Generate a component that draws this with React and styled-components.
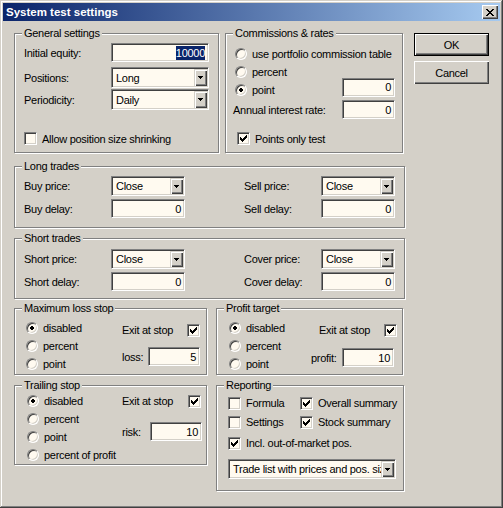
import React from "react";
import styled, { createGlobalStyle, css } from "styled-components";

const GlobalStyle = createGlobalStyle`
  html, body {
    margin: 0;
    padding: 0;
    background: #d4d0c8;
  }
  body {
    font-family: "Liberation Sans", Arial, sans-serif;
    font-size: 11px;
    letter-spacing: -0.28px;
    color: #000;
  }
`;

// little bitmap glyphs, one string per pixel row
const CHECK = ["......#", ".....##", "#...###", "##.###.", "#####..", ".###...", "..#...."];
const DOT = [".##.", "####", "####", ".##."];
const CROSS = ["##....##", ".##..##.", "..####..", "...##...", "..####..", ".##..##.", "##....##"];
const ARROW = ["#####", ".###.", "..#.."];

const Pixels = ({ rows, color = "#000" }) => (
  <svg
    width={rows[0].length}
    height={rows.length}
    shapeRendering="crispEdges"
    style={{ display: "block" }}
  >
    {rows.flatMap((r, y) =>
      [...r].map((c, x) =>
        c === "#" ? (
          <rect key={`${x}-${y}`} x={x} y={y} width="1" height="1" fill={color} />
        ) : null
      )
    )}
  </svg>
);

const Window = styled.div`
  box-sizing: border-box;
  width: 503px;
  height: 508px;
  padding: 3px;
  background: #d4d0c8;
  box-shadow: inset -1px -1px #404040, inset 1px 1px #d4d0c8,
    inset -2px -2px #808080, inset 2px 2px #fff;
  display: flex;
  flex-direction: column;
`;

const TitleBar = styled.div`
  height: 18px;
  flex: none;
  display: flex;
  align-items: center;
  justify-content: space-between;
  padding: 0 2px 0 3px;
  background: linear-gradient(to right, #0a246a, #a6caf0);
  color: #fff;
  font-weight: bold;
  font-size: 11.5px;
  letter-spacing: 0;
`;

const raised = css`
  background: #d4d0c8;
  box-shadow: inset 1px 1px #fff, inset -1px -1px #404040,
    inset -2px -2px #808080;
`;

const CloseButton = styled.div`
  box-sizing: border-box;
  width: 16px;
  height: 14px;
  ${raised}
  display: flex;
  align-items: center;
  justify-content: center;
`;

const Body = styled.div`
  flex: 1;
  display: flex;
  padding: 12px 0 0 11px;
`;

const MainColumn = styled.div`
  width: 391px;
  flex: none;
  display: flex;
  flex-direction: column;
`;

const ButtonColumn = styled.div`
  margin-left: 9px;
  display: flex;
  flex-direction: column;
  gap: 5px;
`;

const PushButton = styled.div`
  box-sizing: border-box;
  width: 75px;
  height: 23px;
  ${raised}
  display: flex;
  align-items: center;
  justify-content: center;
  ${(p) =>
    p.$default &&
    css`
      border: 1px solid #000;
    `}
`;

const Pair = styled.div`
  display: flex;
  align-items: flex-start;
  gap: ${(p) => p.$gap}px;
  margin-top: ${(p) => p.$mt || 0}px;
`;

const Group = styled.div`
  position: relative;
  box-sizing: border-box;
  flex: none;
  width: ${(p) => p.$w}px;
  height: ${(p) => p.$h}px;
  margin-top: ${(p) => p.$mt || 0}px;
  padding-left: ${(p) => p.$pl || 0}px;
  border: 1px solid #808080;
  box-shadow: inset 1px 1px #fff, 1px 1px #fff;
  display: flex;
  flex-direction: ${(p) => (p.$row ? "row" : "column")};
`;

const Legend = styled.span`
  position: absolute;
  top: -8px;
  left: 7px;
  padding: 0 2px;
  line-height: 14px;
  background: #d4d0c8;
  white-space: nowrap;
`;

const Column = styled.div`
  display: flex;
  flex-direction: column;
  flex: none;
  width: ${(p) => (p.$w ? `${p.$w}px` : "auto")};
`;

const Row = styled.div`
  display: flex;
  align-items: center;
  height: ${(p) => p.$h || 18}px;
  margin-top: ${(p) => p.$mt || 0}px;
  margin-left: ${(p) => p.$ml || 0}px;
`;

const Label = styled.span`
  flex: none;
  width: ${(p) => (p.$w ? `${p.$w}px` : "auto")};
  margin-left: ${(p) => p.$ml || 0}px;
  white-space: nowrap;
`;

const sunken = css`
  box-sizing: border-box;
  border: 1px solid;
  border-color: #808080 #fff #fff #808080;
  box-shadow: inset 1px 1px #404040, inset -1px -1px #d4d0c8;
  background: #fffaf0;
`;

const EditBox = styled.div`
  ${sunken}
  flex: none;
  width: ${(p) => p.$w}px;
  height: ${(p) => p.$h || 19}px;
  margin-top: ${(p) => p.$mt || 0}px;
  padding-right: 3px;
  display: flex;
  align-items: center;
  justify-content: flex-end;
`;

const Selected = styled.span`
  background: #0a246a;
  color: #fff;
  line-height: 14px;
`;

const ComboFrame = styled.div`
  ${sunken}
  flex: none;
  width: ${(p) => p.$w}px;
  height: ${(p) => p.$h || 20}px;
  padding: 1px;
  display: flex;
`;

const ComboText = styled.span`
  flex: 1;
  min-width: 0;
  overflow: hidden;
  white-space: nowrap;
  padding-left: 3px;
  display: flex;
  align-items: center;
`;

const DropButton = styled.span`
  flex: none;
  width: 13px;
  ${raised}
  box-shadow: inset 1px 1px #d4d0c8, inset 2px 2px #fff, inset -1px -1px #404040,
    inset -2px -2px #808080;
  display: flex;
  align-items: center;
  justify-content: center;
`;

const CheckFrame = styled.span`
  ${sunken}
  flex: none;
  width: 13px;
  height: 13px;
  margin-left: ${(p) => p.$ml || 0}px;
  display: flex;
  align-items: center;
  justify-content: center;
`;

const RadioFrame = styled.span`
  ${sunken}
  flex: none;
  width: 12px;
  height: 12px;
  border-radius: 50%;
  margin-left: ${(p) => p.$ml || 0}px;
  display: flex;
  align-items: center;
  justify-content: center;
`;

const Option = styled.span`
  flex: none;
  display: flex;
  align-items: center;
  gap: 5px;
  width: ${(p) => (p.$w ? `${p.$w}px` : "auto")};
  white-space: nowrap;
`;

const Edit = ({ value, w, h, mt }) => (
  <EditBox $w={w} $h={h} $mt={mt}>
    {value}
  </EditBox>
);

const Combo = ({ value, w, h }) => (
  <ComboFrame $w={w} $h={h}>
    <ComboText>{value}</ComboText>
    <DropButton>
      <Pixels rows={ARROW} />
    </DropButton>
  </ComboFrame>
);

const Check = ({ on, ml }) => (
  <CheckFrame $ml={ml}>{on && <Pixels rows={CHECK} />}</CheckFrame>
);

const Radio = ({ on, label, w, ml }) => (
  <Option $w={w}>
    <RadioFrame $ml={ml}>{on && <Pixels rows={DOT} />}</RadioFrame>
    {label}
  </Option>
);

const CheckOption = ({ on, label, w, ml }) => (
  <Option $w={w}>
    <Check on={on} ml={ml} />
    {label}
  </Option>
);

const StopRadios = ({ w, mt, items }) => (
  <Column $w={w}>
    {items.map((label, i) => (
      <Row key={label} $mt={i === 0 ? mt : 0}>
        <Radio on={i === 0} label={label} />
      </Row>
    ))}
  </Column>
);

const TradeGroup = ({ title, mt, top, rows }) => (
  <Group $w={391} $h={top === 10 ? 62 : 61} $mt={mt} $pl={9}>
    <Legend>{title}</Legend>
    <Row $h={20} $mt={top - 1}>
      <Label $w={87}>{rows[0]}</Label>
      <Combo w={74} value="Close" />
      <Label $w={77} $ml={59}>
        {rows[1]}
      </Label>
      <Combo w={74} value="Close" />
    </Row>
    <Row $h={19} $mt={3}>
      <Label $w={87}>{rows[2]}</Label>
      <Edit w={74} value="0" />
      <Label $w={77} $ml={59}>
        {rows[3]}
      </Label>
      <Edit w={74} value="0" />
    </Row>
  </Group>
);

export default function App() {
  return (
    <>
      <GlobalStyle />
      <Window>
        <TitleBar>
          <span>System test settings</span>
          <CloseButton>
            <Pixels rows={CROSS} />
          </CloseButton>
        </TitleBar>
        <Body>
          <MainColumn>
            <Pair $gap={6}>
              <Group $w={205} $h={120} $pl={9}>
                <Legend>General settings</Legend>
                <Row $h={19} $mt={9}>
                  <Label $w={87}>Initial equity:</Label>
                  <Edit w={98} value={<Selected>10000</Selected>} />
                </Row>
                <Row $h={21} $mt={5}>
                  <Label $w={87}>Positions:</Label>
                  <Combo w={98} h={21} value="Long" />
                </Row>
                <Row $h={21} $mt={1}>
                  <Label $w={87}>Periodicity:</Label>
                  <Combo w={98} h={21} value="Daily" />
                </Row>
                <Row $h={13} $mt={22}>
                  <CheckOption label="Allow position size shrinking" />
                </Row>
              </Group>
              <Group $w={178} $h={120} $pl={7}>
                <Legend>Commissions &amp; rates</Legend>
                <Row $mt={11}>
                  <Radio ml={2} label="use portfolio commission table" />
                </Row>
                <Row>
                  <Radio ml={2} label="percent" />
                </Row>
                <Row>
                  <Radio ml={2} on label="point" w={109} />
                  <Edit w={53} mt={-6} value="0" />
                </Row>
                <Row $h={19} $mt={1}>
                  <Label $w={109}>Annual interest rate:</Label>
                  <Edit w={53} value="0" />
                </Row>
                <Row $h={13} $mt={13}>
                  <CheckOption on ml={4} label="Points only test" />
                </Row>
              </Group>
            </Pair>

            <TradeGroup
              title="Long trades"
              mt={13}
              top={10}
              rows={["Buy price:", "Sell price:", "Buy delay:", "Sell delay:"]}
            />
            <TradeGroup
              title="Short trades"
              mt={10}
              top={11}
              rows={["Short price:", "Cover price:", "Short delay:", "Cover delay:"]}
            />

            <Pair $gap={9} $mt={9}>
              <Group $w={193} $h={67} $pl={11} $row>
                <Legend>Maximum loss stop</Legend>
                <StopRadios w={96} mt={10} items={["disabled", "percent", "point"]} />
                <Column>
                  <Row $mt={12}>
                    <Label $w={65}>Exit at stop</Label>
                    <Check on />
                  </Row>
                  <Row $h={19} $mt={8}>
                    <Label $w={26}>loss:</Label>
                    <Edit w={52} value="5" />
                  </Row>
                </Column>
              </Group>
              <Group $w={187} $h={67} $pl={12} $row>
                <Legend>Profit target</Legend>
                <StopRadios w={82} mt={10} items={["disabled", "percent", "point"]} />
                <Column>
                  <Row $mt={12} $ml={8}>
                    <Label $w={65}>Exit at stop</Label>
                    <Check on />
                  </Row>
                  <Row $h={19} $mt={9}>
                    <Label $w={31}>profit:</Label>
                    <Edit w={52} value="10" />
                  </Row>
                </Column>
              </Group>
            </Pair>

            <Pair $gap={9} $mt={10}>
              <Group $w={193} $h={80} $pl={12} $row>
                <Legend>Trailing stop</Legend>
                <StopRadios
                  w={95}
                  mt={6}
                  items={["disabled", "percent", "point", "percent of profit"]}
                />
                <Column>
                  <Row $mt={6}>
                    <Label $w={66}>Exit at stop</Label>
                    <Check on />
                  </Row>
                  <Row $h={19} $mt={12}>
                    <Label $w={28}>risk:</Label>
                    <Edit w={52} value="10" />
                  </Row>
                </Column>
              </Group>
              <Group $w={188} $h={106} $pl={11}>
                <Legend>Reporting</Legend>
                <Row $mt={8}>
                  <CheckOption w={72} label="Formula" />
                  <CheckOption on label="Overall summary" />
                </Row>
                <Row $mt={1}>
                  <CheckOption w={72} label="Settings" />
                  <CheckOption on label="Stock summary" />
                </Row>
                <Row $mt={3}>
                  <CheckOption on label="Incl. out-of-market pos." />
                </Row>
                <Row $h={20} $mt={7}>
                  <Combo w={168} value="Trade list with prices and pos. size" />
                </Row>
              </Group>
            </Pair>
          </MainColumn>
          <ButtonColumn>
            <PushButton $default>OK</PushButton>
            <PushButton>Cancel</PushButton>
          </ButtonColumn>
        </Body>
      </Window>
    </>
  );
}
